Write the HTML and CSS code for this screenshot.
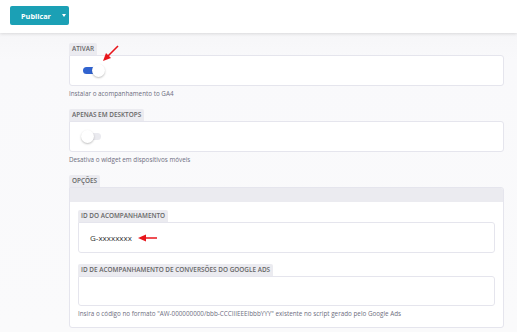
FILE: index.html
```html
<!DOCTYPE html>
<html lang="pt">
<head>
<meta charset="utf-8">
<link rel="stylesheet" href="styles.css">
</head>
<body>
<header class="topbar">
  <button class="btn"><span class="btn-label">Publicar</span><span class="caret"></span></button>
</header>
<main class="content">
  <section class="field">
    <div class="tab">ATIVAR</div>
    <div class="box box-toggle">
      <span class="toggle on"><span class="knob"></span></span>
      <svg class="arrow arrow-toggle" width="20" height="20" viewBox="0 0 20 20"><path d="M17 2 L6 13" stroke="#e8151b" stroke-width="1.6" fill="none"/><path d="M2 17 L5 9 L10 14 Z" fill="#e8151b"/></svg>
    </div>
    <p class="help">Instalar o acompanhamento to GA4</p>
  </section>
  <section class="field">
    <div class="tab">APENAS EM DESKTOPS</div>
    <div class="box box-toggle">
      <span class="toggle off"><span class="knob"></span></span>
    </div>
    <p class="help">Desativa o widget em dispositivos móveis</p>
  </section>
  <section class="field options">
    <div class="tab">OPÇÕES</div>
    <div class="panel">
      <div class="panel-head"></div>
      <div class="panel-body">
        <div class="tab">ID DO ACOMPANHAMENTO</div>
        <div class="box box-input">
          <span class="value">G-xxxxxxxx</span>
          <svg class="arrow arrow-left" width="20" height="8" viewBox="0 0 20 8"><path d="M6 4 H19" stroke="#e8151b" stroke-width="1.6"/><path d="M0 4 L8 0.5 L8 7.5 Z" fill="#e8151b"/></svg>
        </div>
        <div class="tab tab-gap">ID DE ACOMPANHAMENTO DE CONVERSÕES DO GOOGLE ADS</div>
        <div class="box box-input2"></div>
        <p class="help">Insira o código no formato "AW-000000000/bbb-CCCIIIEEEIbbbYYY" existente no script gerado pelo Google Ads</p>
      </div>
    </div>
  </section>
</main>
</body>
</html>
```
FILE: styles.css
```css
* { box-sizing: border-box; }
html, body { margin: 0; padding: 0; }
body {
  width: 517px;
  height: 332px;
  overflow: hidden;
  font-family: "Open Sans", "Liberation Sans", sans-serif;
  background: linear-gradient(#f3f3f5 0, #f9f9fb 60px, #fafafb 100%);
  color: #333;
}
.topbar {
  height: 33px;
  background: #fff;
  padding: 6px 10px;
  box-shadow: 0 1px 3px rgba(0,0,0,0.12);
  position: relative;
}
.btn {
  width: 59px;
  height: 19px;
  border: none;
  border-radius: 2px;
  background: #1ba0b5;
  color: #fff;
  font-family: "Open Sans", "Liberation Sans", sans-serif;
  font-weight: 700;
  font-size: 7.3px;
  display: flex;
  align-items: center;
  padding: 0 0 0 11px;
  gap: 11px;
}
.caret {
  width: 0; height: 0;
  border-left: 2.5px solid transparent;
  border-right: 2.5px solid transparent;
  border-top: 3px solid #fff;
}
.content {
  padding: 10px 13px 0 69px;
}
.field { margin-bottom: 10px; }
.tab {
  display: block;
  width: fit-content;
  height: 12px;
  line-height: 12px;
  padding: 0 3px;
  font-size: 6.4px;
  font-weight: 600;
  color: #666;
  background: #ebebf0;
  border-radius: 2px 2px 0 0;
}
.box {
  background: #fff;
  border: 1px solid #e5e5ed;
  border-radius: 0 3px 3px 3px;
  position: relative;
}
.box-toggle {
  height: 31px;
  display: flex;
  align-items: center;
  padding-left: 13px;
}
.toggle {
  width: 18px;
  height: 7px;
  border-radius: 4px;
  position: relative;
  display: block;
}
.toggle.on { background: #3163cf; }
.toggle.off { background: #eaeaef; }
.knob {
  position: absolute;
  top: -3px;
  width: 13px;
  height: 13px;
  border-radius: 50%;
  background: #fff;
  box-shadow: 0 1px 2px rgba(0,0,0,0.25);
}
.toggle.on .knob { left: 9px; }
.toggle.off .knob { left: -2px; }
.arrow { position: absolute; }
.arrow-toggle { left: 31px; top: -12px; }
.help {
  margin: 3px 0 0 0;
  font-size: 6.3px;
  line-height: 10px;
  color: #6e6e80;
}
.options { margin-bottom: 0; }
.panel {
  background: #fff;
  border: 1px solid #e5e5ed;
  border-radius: 0 3px 3px 3px;
  height: 141px;
  overflow: hidden;
}
.panel-head {
  height: 14px;
  background: #ebebf0;
}
.panel-body {
  padding: 8px 8px 0 8px;
}
.box-input {
  height: 31px;
  display: flex;
  align-items: center;
  padding-left: 11px;
}
.value {
  font-size: 8px;
  color: #333;
}
.arrow-left { position: static; margin-left: 6px; }
.tab-gap { margin-top: 11px; }
.box-input2 { height: 30px; }
.panel-body .help { margin-top: 3px; }
```
